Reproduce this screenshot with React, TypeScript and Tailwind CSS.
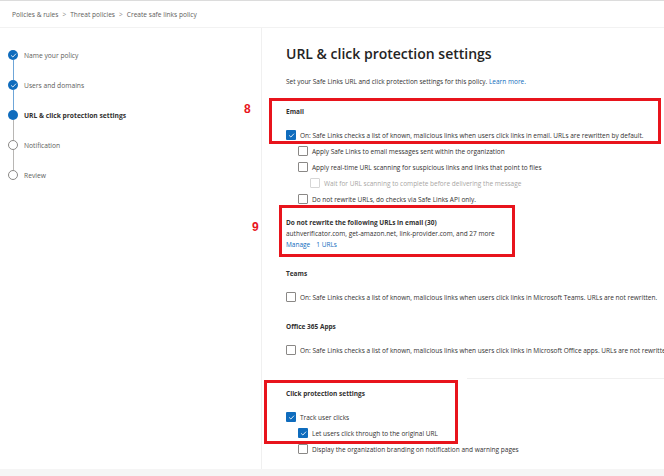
import React from "react";

const Check = ({ size = 7 }: { size?: number }) => (
  <svg width={size} height={size} viewBox="0 0 10 10" fill="none">
    <path d="M2 5.2 L4.1 7.2 L8.2 2.8" stroke="white" strokeWidth="1.2" strokeLinecap="round" strokeLinejoin="round" />
  </svg>
);

const Box = ({ checked = false, disabled = false }: { checked?: boolean; disabled?: boolean }) =>
  checked ? (
    <div className="w-[10px] h-[10px] rounded-[1px] bg-[#0f6cbd] flex items-center justify-center shrink-0">
      <Check />
    </div>
  ) : (
    <div
      className={
        disabled
          ? "w-[10px] h-[10px] rounded-[1px] border border-[#d6d6d6] bg-white shrink-0"
          : "w-[10px] h-[10px] rounded-[1px] border border-[#8a8886] bg-white shrink-0"
      }
    />
  );

const Row = ({
  indent = 0,
  checked = false,
  disabled = false,
  children,
}: {
  indent?: number;
  checked?: boolean;
  disabled?: boolean;
  children: React.ReactNode;
}) => (
  <div className="flex items-center h-[16px] gap-[4px]" style={{ paddingLeft: indent }}>
    <Box checked={checked} disabled={disabled} />
    <span className={disabled ? "text-[#a8a6a4] whitespace-nowrap" : "text-[#323130] whitespace-nowrap"}>{children}</span>
  </div>
);

const Step = ({ state, label }: { state: "done" | "current" | "todo"; label: string }) => (
  <div className="flex items-center h-[10px]">
    {state === "done" && (
      <div className="w-[10px] h-[10px] rounded-full bg-[#0f6cbd] flex items-center justify-center">
        <Check size={7} />
      </div>
    )}
    {state === "current" && <div className="w-[10px] h-[10px] rounded-full bg-[#0f6cbd]" />}
    {state === "todo" && <div className="w-[10px] h-[10px] rounded-full border border-[#8a8886] bg-white" />}
    <span
      className={
        state === "current"
          ? "ml-[6px] font-bold text-[#323130] whitespace-nowrap"
          : "ml-[6px] text-[#605e5c] whitespace-nowrap"
      }
    >
      {label}
    </span>
  </div>
);

const Connector = ({ blue }: { blue: boolean }) => (
  <div className={blue ? "ml-[4.5px] w-px h-[20px] bg-[#6fa6d8]" : "ml-[4.5px] w-px h-[20px] bg-[#b8b6b4]"} />
);

export default function App() {
  return (
    <div
      className="w-[664px] h-[476px] bg-white relative overflow-hidden text-[6.5px] leading-[11px] text-[#323130]"
      style={{ fontFamily: '"Open Sans", "Noto Sans", sans-serif' }}
    >
      <div className="h-[28px] border-t border-[#dcdcdc] border-b border-b-[#f2f2f2] flex items-center pl-[12px] text-[#605e5c] text-[6.6px]">
        <span>Policies &amp; rules</span>
        <span className="mx-[4px] text-[#8a8886]">&gt;</span>
        <span>Threat policies</span>
        <span className="mx-[4px] text-[#8a8886]">&gt;</span>
        <span>Create safe links policy</span>
      </div>

      <div className="flex h-[441px]">
        <div className="w-[262px] shrink-0 border-r border-[#f0f0f0] pl-[8px] pt-[22px] text-[6.7px]">
          <Step state="done" label="Name your policy" />
          <Connector blue />
          <Step state="done" label="Users and domains" />
          <Connector blue />
          <Step state="current" label="URL & click protection settings" />
          <Connector blue={false} />
          <Step state="todo" label="Notification" />
          <Connector blue={false} />
          <Step state="todo" label="Review" />
        </div>

        <div className="flex-1 min-w-0 overflow-hidden pl-[24px] flex flex-col">
          <div className="mt-[16px] h-[20px] leading-[20px] text-[14px] font-semibold text-[#242424] whitespace-nowrap">
            URL &amp; click protection settings
          </div>
          <div className="mt-[12px] h-[12px] leading-[12px] whitespace-nowrap">
            Set your Safe Links URL and click protection settings for this policy.{" "}
            <span className="text-[#0f6cbd]">Learn more.</span>
          </div>

          <div className="mt-[18px] h-[12px] leading-[12px] font-bold">Email</div>
          <div className="mt-[9px]">
            <Row checked>
              On: Safe Links checks a list of known, malicious links when users click links in email. URLs are rewritten by default.
            </Row>
            <Row indent={12}>Apply Safe Links to email messages sent within the organization</Row>
            <Row indent={12}>Apply real-time URL scanning for suspicious links and links that point to files</Row>
            <Row indent={24} disabled>
              Wait for URL scanning to complete before delivering the message
            </Row>
            <Row indent={12}>Do not rewrite URLs, do checks via Safe Links API only.</Row>
          </div>

          <div className="mt-[10px] h-[11px] font-bold whitespace-nowrap">Do not rewrite the following URLs in email (30)</div>
          <div className="h-[11px] whitespace-nowrap">authverificator.com, get-amazon.net, link-provider.com, and 27 more</div>
          <div className="h-[11px] text-[#0f6cbd] whitespace-nowrap">
            Manage<span className="ml-[6px]">1 URLs</span>
          </div>

          <div className="mt-[18px] h-[11px] font-bold">Teams</div>
          <div className="mt-[10px]">
            <Row>On: Safe Links checks a list of known, malicious links when users click links in Microsoft Teams. URLs are not rewritten.</Row>
          </div>

          <div className="mt-[16px] h-[11px] font-bold">Office 365 Apps</div>
          <div className="mt-[10px]">
            <Row>On: Safe Links checks a list of known, malicious links when users click links in Microsoft Office apps. URLs are not rewritten.</Row>
          </div>

          <div className="mt-[20px] ml-[181px] h-px bg-[#f0f0f0]" />

          <div className="mt-[9px] h-[11px] font-bold">Click protection settings</div>
          <div className="mt-[10px]">
            <Row checked>Track user clicks</Row>
            <Row indent={12} checked>
              Let users click through to the original URL
            </Row>
            <Row indent={12}>Display the organization branding on notification and warning pages</Row>
          </div>
        </div>
      </div>

      <div className="h-[7px] bg-[#f5f5f5]" />

      {/* annotations */}
      <div className="absolute left-[269px] top-[98px] w-[392px] h-[46px] border-[3px] border-[#e8141c]" />
      <div className="absolute left-[244px] top-[104px] text-[#e8141c] text-[12px] font-bold" style={{ fontFamily: '"Liberation Sans", sans-serif' }}>
        8
      </div>
      <div className="absolute left-[279px] top-[205px] w-[236px] h-[52px] border-[3px] border-[#e8141c]" />
      <div className="absolute left-[252px] top-[222px] text-[#e8141c] text-[12px] font-bold" style={{ fontFamily: '"Liberation Sans", sans-serif' }}>
        9
      </div>
      <div className="absolute left-[264px] top-[380px] w-[194px] h-[64px] border-[3px] border-[#e8141c]" />
    </div>
  );
}
